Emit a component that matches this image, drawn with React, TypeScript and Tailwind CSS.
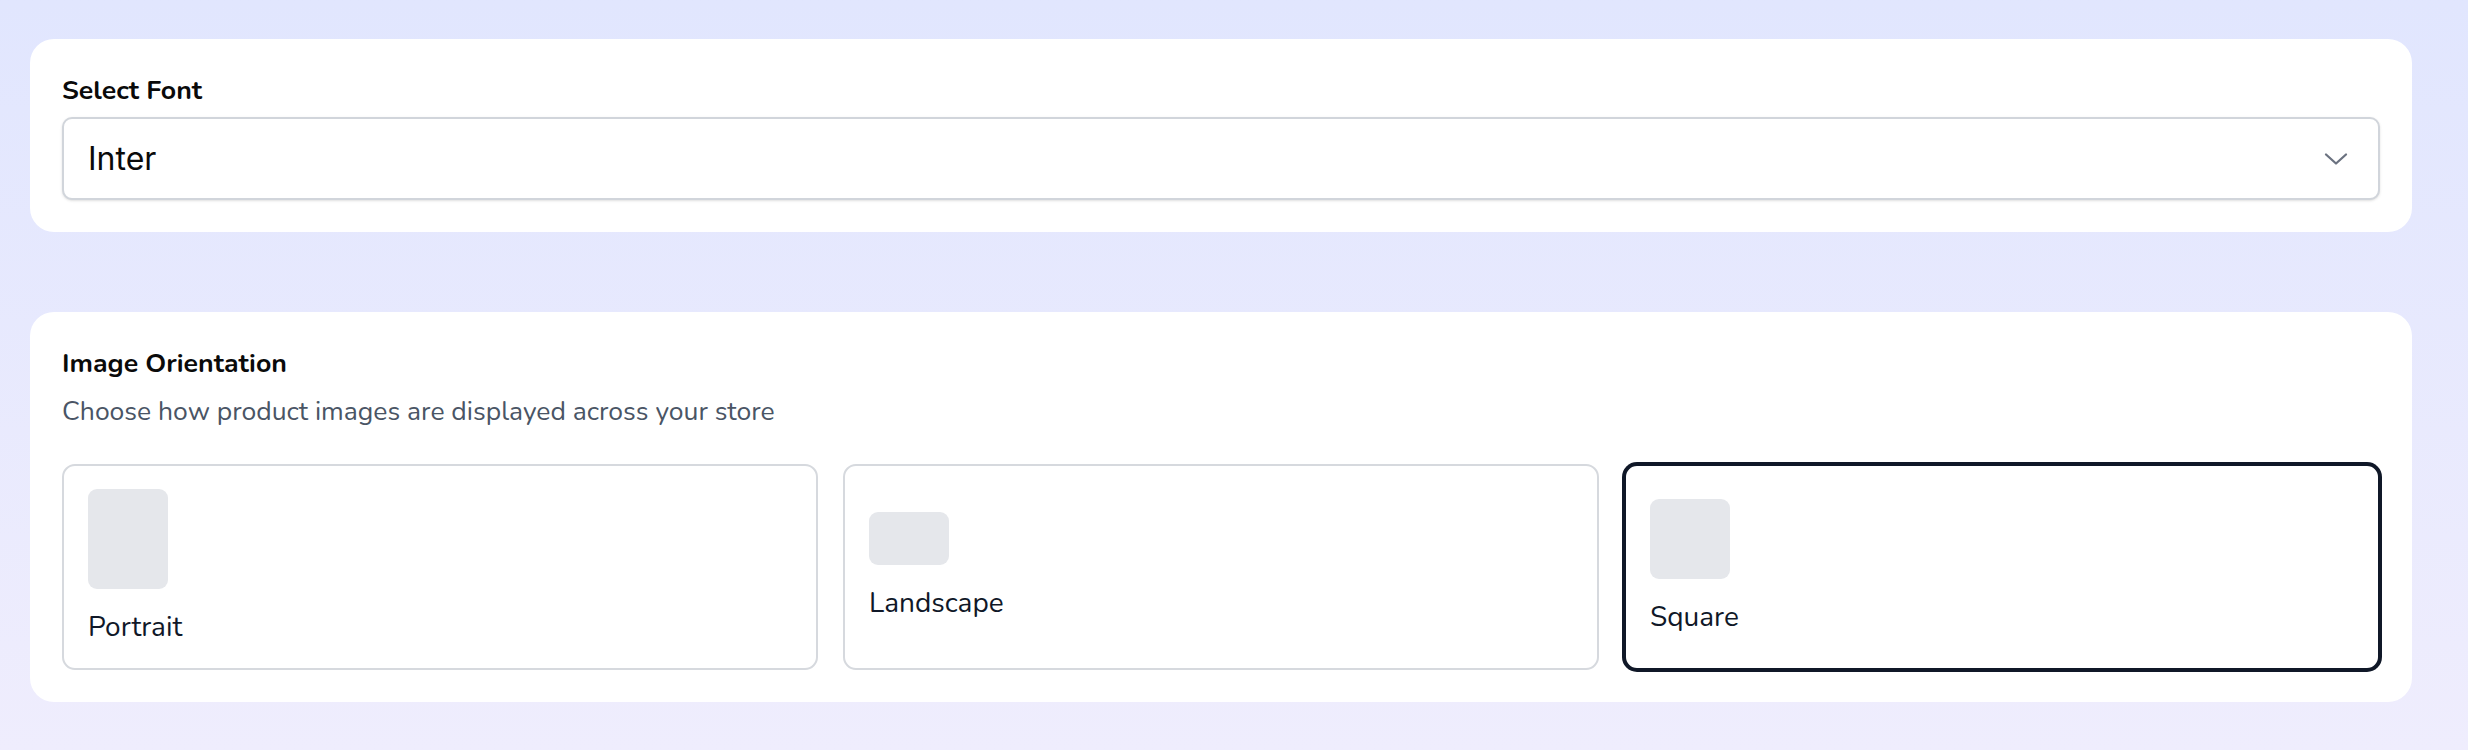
import React, { useState } from "react";

type Orientation = "portrait" | "landscape" | "square";

const ORIENTATIONS: { id: Orientation; label: string; thumb: string }[] = [
  { id: "portrait", label: "Portrait", thumb: "w-[80px] h-[100px]" },
  { id: "landscape", label: "Landscape", thumb: "w-[80px] h-[53px]" },
  { id: "square", label: "Square", thumb: "w-[80px] h-[80px]" },
];

function ChevronDown() {
  return (
    <svg width="24" height="14" viewBox="0 0 24 14" fill="none" className="text-[#6b7280]">
      <path d="M2 2.5 12 11.5l10-9" stroke="currentColor" strokeWidth="2.3" strokeLinecap="round" strokeLinejoin="round" />
    </svg>
  );
}

export default function App() {
  const [font] = useState("Inter");
  const [orientation, setOrientation] = useState<Orientation>("square");

  return (
    <div className="min-h-screen bg-gradient-to-b from-[#e1e6fe] to-[#efedfd] pl-[30px] pr-[56px] pt-[39px] pb-10 font-['Nunito','Lato',sans-serif]">
      {/* Font picker */}
      <section className="rounded-[24px] bg-white p-8">
        <label className="mb-2 block text-[26.7px] font-bold leading-[38px] text-[#0a0a0a]">Select Font</label>
        <button
          type="button"
          className="flex h-[83px] w-full items-center justify-between rounded-[10px] border-2 border-[#d1d5db] bg-white pl-6 pr-[30px] shadow-sm"
        >
          <span className="font-['Inter',sans-serif] text-[32px] text-[#0a0a0a]">{font}</span>
          <ChevronDown />
        </button>
      </section>

      {/* Image orientation */}
      <section className="mt-20 rounded-[24px] bg-white p-8">
        <h3 className="text-[26.7px] font-bold leading-[38px] text-[#0a0a0a]">Image Orientation</h3>
        <p className="mt-[10px] text-[26.5px] leading-[38px] text-[#4a5565]">
          Choose how product images are displayed across your store
        </p>

        <div className="mt-[34px] grid grid-cols-3 gap-[25px]">
          {ORIENTATIONS.map((o) => {
            const active = o.id === orientation;
            return (
              <button
                key={o.id}
                type="button"
                onClick={() => setOrientation(o.id)}
                className={
                  active
                    ? "flex h-[206px] flex-col items-start justify-center rounded-[13px] border-2 border-[#101828] bg-white px-[24px] ring-2 ring-[#101828]"
                    : "flex h-[206px] flex-col items-start justify-center rounded-[13px] border-2 border-[#d6d9de] bg-white px-[24px]"
                }
              >
                <div className={`${o.thumb} rounded-[9px] bg-[#e5e7eb]`} />
                <span className="mt-[19px] text-[28px] leading-[38px] text-[#101828]">{o.label}</span>
              </button>
            );
          })}
        </div>
      </section>
    </div>
  );
}
